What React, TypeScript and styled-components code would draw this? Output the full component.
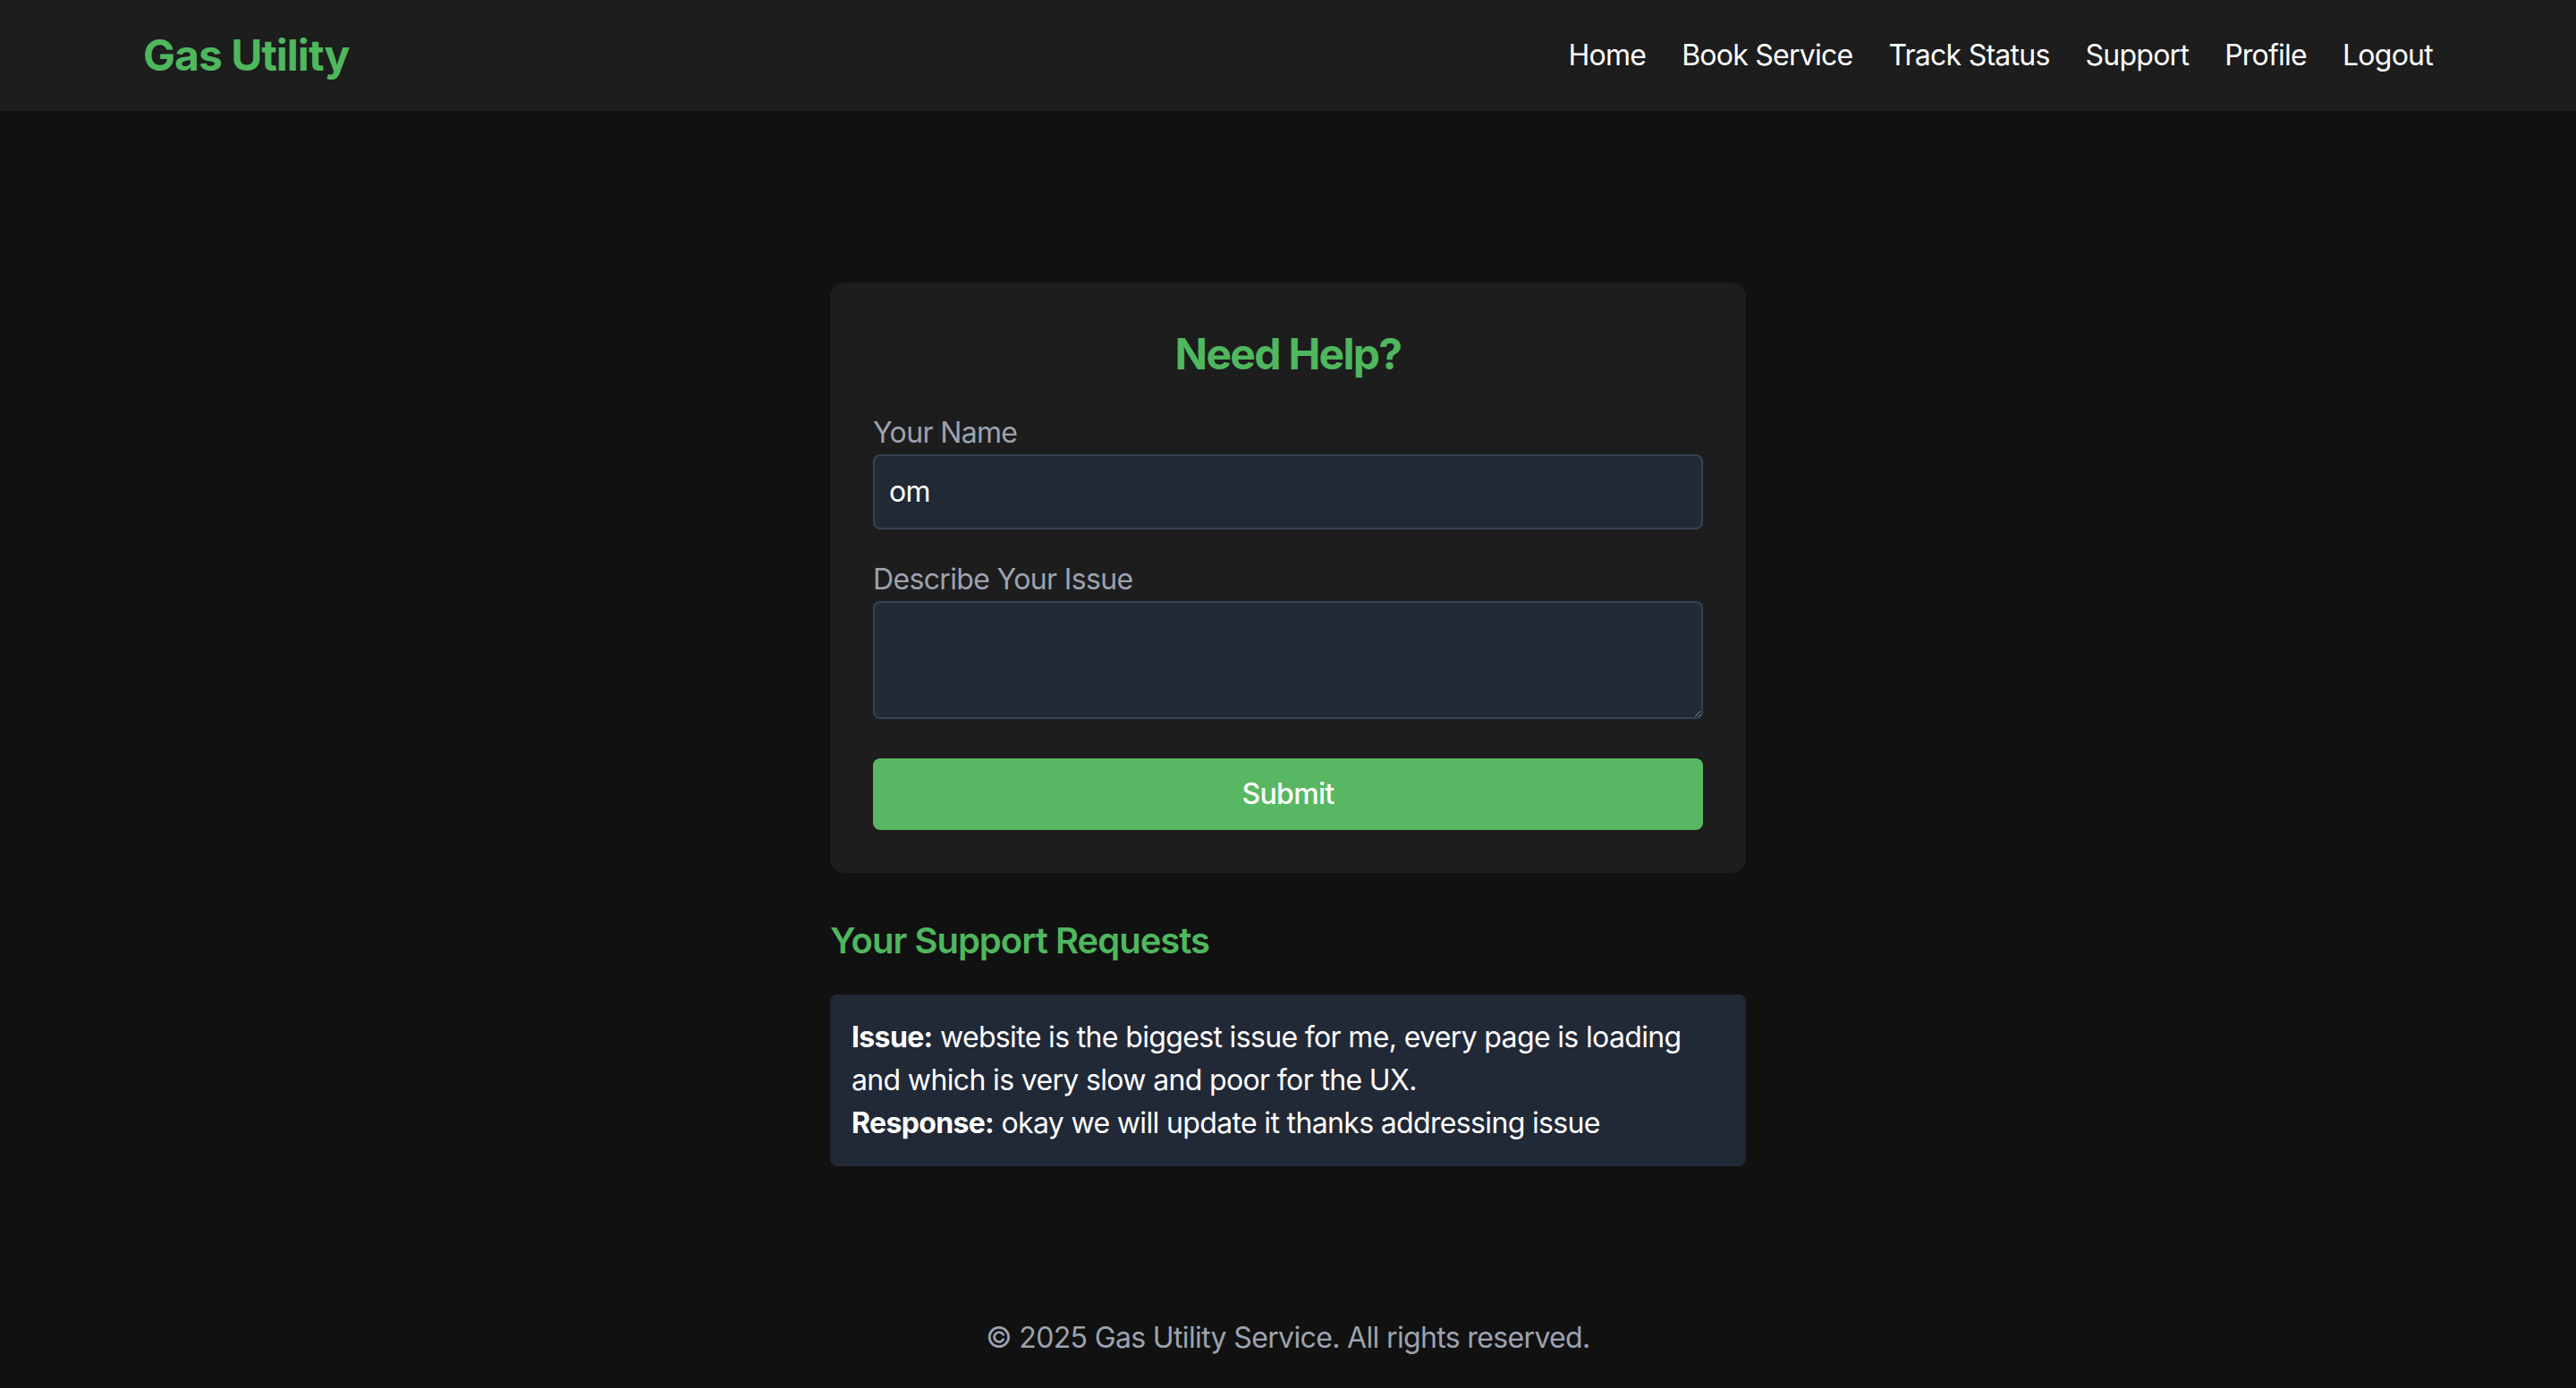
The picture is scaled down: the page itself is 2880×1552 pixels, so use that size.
import React, { useState } from "react";
import styled, { createGlobalStyle } from "styled-components";

const GlobalStyle = createGlobalStyle`
  * { box-sizing: border-box; }
  html, body { margin: 0; padding: 0; }
  body {
    background: #111111;
    color: #ffffff;
    font-family: Inter, "Noto Sans", "Liberation Sans", sans-serif;
    letter-spacing: -0.65px;
    -webkit-font-smoothing: antialiased;
  }
`;

const Page = styled.div`
  min-height: 100vh;
  display: flex;
  flex-direction: column;
  background: #111111;
`;

const Header = styled.header`
  background: #1d1d1d;
  padding: 30px 0;
`;

const HeaderInner = styled.div`
  max-width: 2560px;
  margin: 0 auto;
  display: flex;
  align-items: center;
  justify-content: space-between;
`;

const Logo = styled.div`
  color: #4fb75d;
  font-size: 48px;
  line-height: 64px;
  font-weight: 700;
  letter-spacing: -1px;
`;

const Nav = styled.nav`
  display: flex;
  align-items: center;
  gap: 40px;
`;

const NavLink = styled.a`
  color: #ffffff;
  font-size: 32px;
  line-height: 48px;
  letter-spacing: -0.75px;
  text-decoration: none;
  cursor: pointer;
`;

const Main = styled.main`
  flex: 1;
  padding-top: 192px;
  display: flex;
  flex-direction: column;
  align-items: center;
`;

const Column = styled.div`
  width: 1024px;
`;

const Card = styled.form`
  background: #1d1d1d;
  border-radius: 16px;
  padding: 48px;
`;

const CardTitle = styled.h2`
  margin: 0 0 32px;
  text-align: center;
  color: #4fb75d;
  font-size: 48px;
  line-height: 64px;
  font-weight: 700;
  letter-spacing: -1.7px;
`;

const Field = styled.div<{ $gap?: number }>`
  margin-bottom: ${(p) => p.$gap ?? 32}px;
`;

const Label = styled.label`
  display: block;
  color: #9ca3af;
  font-size: 32px;
  line-height: 48px;
`;

const Input = styled.input`
  display: block;
  width: 100%;
  background: #212836;
  border: 2px solid #374151;
  border-radius: 8px;
  padding: 16px;
  color: #ffffff;
  font-family: inherit;
  letter-spacing: inherit;
  font-size: 32px;
  line-height: 48px;
  outline: none;
`;

const TextArea = styled.textarea`
  display: block;
  width: 100%;
  height: 132px;
  background: #212836;
  border: 2px solid #374151;
  border-radius: 8px;
  padding: 16px;
  color: #ffffff;
  font-family: inherit;
  letter-spacing: inherit;
  font-size: 32px;
  line-height: 48px;
  outline: none;
  color-scheme: dark;
`;

const SubmitButton = styled.button`
  display: block;
  width: 100%;
  background: #58b762;
  color: #ffffff;
  border: none;
  border-radius: 8px;
  padding: 16px;
  font-family: inherit;
  letter-spacing: inherit;
  font-size: 32px;
  line-height: 48px;
  font-weight: 500;
  cursor: pointer;
`;

const SectionTitle = styled.h3`
  margin: 48px 0 32px;
  color: #4fb75d;
  font-size: 40px;
  line-height: 56px;
  font-weight: 600;
  letter-spacing: -1px;
`;

const RequestBox = styled.div`
  background: #212836;
  border-radius: 8px;
  padding: 24px;
`;

const RequestLine = styled.p`
  margin: 0;
  color: #ffffff;
  font-size: 32px;
  line-height: 48px;
`;

const Footer = styled.footer`
  padding: 32px 0;
  text-align: center;
  color: #9ca3af;
  font-size: 32px;
  line-height: 48px;
`;

const navItems = ["Home", "Book Service", "Track Status", "Support", "Profile", "Logout"];

export default function App() {
  const [name, setName] = useState("om");
  const [issue, setIssue] = useState("");
  return (
    <>
      <GlobalStyle />
      <Page>
        <Header>
          <HeaderInner>
            <Logo>Gas Utility</Logo>
            <Nav>
              {navItems.map((n) => (
                <NavLink key={n}>{n}</NavLink>
              ))}
            </Nav>
          </HeaderInner>
        </Header>
        <Main>
          <Column>
            <Card onSubmit={(e) => e.preventDefault()}>
              <CardTitle>Need Help?</CardTitle>
              <Field>
                <Label>Your Name</Label>
                <Input value={name} onChange={(e) => setName(e.target.value)} />
              </Field>
              <Field $gap={44}>
                <Label>Describe Your Issue</Label>
                <TextArea rows={2} value={issue} onChange={(e) => setIssue(e.target.value)} />
              </Field>
              <SubmitButton type="submit">Submit</SubmitButton>
            </Card>
            <SectionTitle>Your Support Requests</SectionTitle>
            <RequestBox>
              <RequestLine>
                <strong>Issue:</strong> website is the biggest issue for me, every page is loading and which is very slow and poor for the UX.
              </RequestLine>
              <RequestLine>
                <strong>Response:</strong> okay we will update it thanks addressing issue
              </RequestLine>
            </RequestBox>
          </Column>
        </Main>
        <Footer>© 2025 Gas Utility Service. All rights reserved.</Footer>
      </Page>
    </>
  );
}
